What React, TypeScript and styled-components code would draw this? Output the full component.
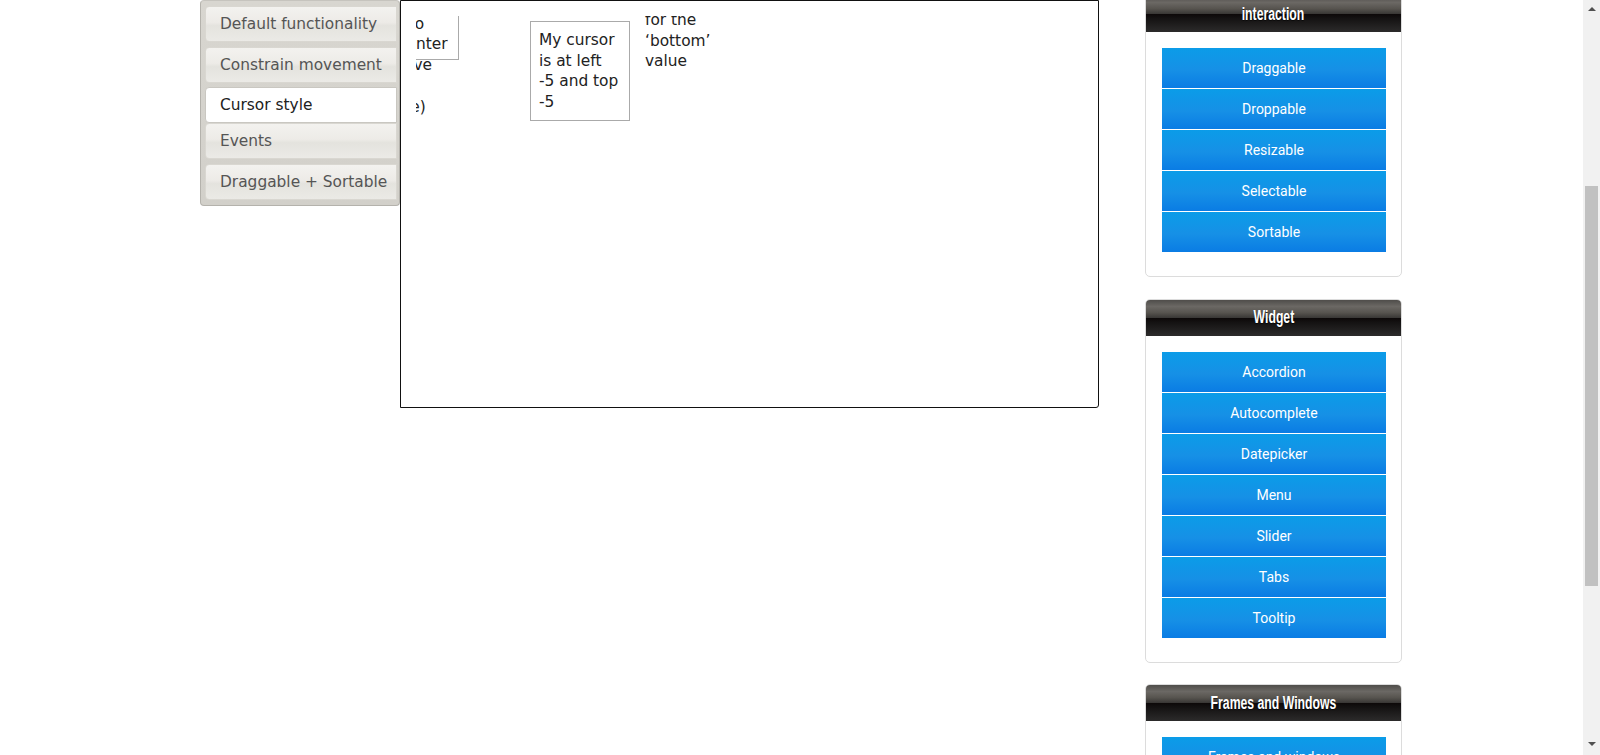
import React from "react";
import styled, { createGlobalStyle } from "styled-components";

const Global = createGlobalStyle`
  html, body { margin: 0; padding: 0; background: #fff; overflow: hidden; }
  #root { height: 755px; }
`;

const Screen = styled.div`
  display: flex;
  width: 1600px;
  height: 755px;
  overflow: hidden;
`;

const Main = styled.div`
  flex: 1;
  overflow: hidden;
`;

const Page = styled.div`
  display: flex;
  align-items: flex-start;
  padding-left: 200px;
`;

const TabsPanel = styled.ul`
  box-sizing: border-box;
  width: 200px;
  margin: 0;
  padding: 5px 0 5px 4px;
  list-style: none;
  display: flex;
  flex-direction: column;
  background: linear-gradient(to bottom, #d8d6d0, #d2d0ca);
  border: 1px solid #b4b2ac;
  border-top-color: #c6c4be;
  border-radius: 4px;
`;

const Tab = styled.li<{ $active?: boolean; $gap: number }>`
  box-sizing: border-box;
  height: 36px;
  margin: 0 2px ${(p) => p.$gap}px 0;
  padding-left: 14px;
  display: flex;
  align-items: center;
  font-family: "DejaVu Sans", Verdana, sans-serif;
  font-size: 15.4px;
  color: ${(p) => (p.$active ? "#212121" : "#555")};
  background: ${(p) =>
    p.$active
      ? "#fff"
      : "linear-gradient(to bottom, #f3f2ef 0%, #edebe7 45%, #e4e3de 55%, #ebeae6 100%)"};
  border: 1px solid ${(p) => (p.$active ? "#c9c7c1" : "#d9d7d1")};
  border-radius: 4px 0 0 4px;
`;

const ContentBox = styled.div`
  box-sizing: border-box;
  width: 699px;
  height: 408px;
  padding: 15px;
  border: 1px solid #111;
  border-radius: 0 0 3px 0;
  background: #fff;
`;

const Viewport = styled.div`
  width: 100%;
  height: 100%;
  overflow: hidden;
`;

const Doc = styled.div`
  display: flex;
  align-items: flex-start;
  margin: -32px 0 0 -57px;
  font-family: "DejaVu Sans", Verdana, sans-serif;
  font-size: 15.4px;
  line-height: 20.7px;
  color: #222;
`;

const DragBox = styled.div<{ $top: number; $left: number; $height: number; $bordered?: boolean }>`
  box-sizing: border-box;
  flex: none;
  width: 100px;
  height: ${(p) => p.$height}px;
  margin-top: ${(p) => p.$top}px;
  margin-left: ${(p) => p.$left}px;
  padding: 8px;
  border: 1px solid ${(p) => (p.$bordered ? "#aaa" : "transparent")};
  white-space: nowrap;
`;

const Line = styled.div``;

const Sidebar = styled.aside`
  width: 257px;
  margin-left: 46px;
  margin-top: -5px;
  display: flex;
  flex-direction: column;
  gap: 21.5px;
`;

const Card = styled.section`
  box-sizing: border-box;
  border: 1px solid #dcdcdc;
  border-radius: 5px;
  background: #fff;
  overflow: hidden;
`;

const CardHeader = styled.h3`
  margin: 0;
  height: 36px;
  display: flex;
  align-items: center;
  justify-content: center;
  overflow: hidden;
  background: linear-gradient(
    to bottom,
    #4f4d4a 0%,
    #6b6864 18%,
    #57544f 35%,
    #3a3836 49%,
    #0c0808 50%,
    #141212 62%,
    #2c2b2b 100%
  );
`;

const HeaderText = styled.span`
  display: inline-block;
  font-family: "Liberation Sans", Arial, sans-serif;
  font-weight: bold;
  font-size: 18px;
  color: #fff;
  white-space: nowrap;
  transform: scaleX(0.68);
  text-shadow: 0 1px 1px rgba(0, 0, 0, 0.6);
`;

const ButtonList = styled.div`
  display: flex;
  flex-direction: column;
  gap: 1px;
  padding: 16px 15px 24px 16px;
`;

const NavButton = styled.a`
  height: 40px;
  display: flex;
  align-items: center;
  justify-content: center;
  font-family: Roboto, "Liberation Sans", sans-serif;
  font-size: 14px;
  color: #fff;
  text-decoration: none;
  background: linear-gradient(to bottom, #0b9ce8 0%, #1690e6 55%, #0a7ce4 100%);
`;

const Scrollbar = styled.div`
  width: 17px;
  height: 755px;
  background: #f1f1f1;
  display: flex;
  flex-direction: column;
  align-items: center;
`;

const Arrow = styled.div<{ $down?: boolean }>`
  width: 0;
  height: 0;
  margin-top: ${(p) => (p.$down ? "auto" : "7px")};
  margin-bottom: ${(p) => (p.$down ? "9px" : "0")};
  border-left: 4px solid transparent;
  border-right: 4px solid transparent;
  ${(p) => (p.$down ? "border-top: 4px solid #505050;" : "border-bottom: 4px solid #505050;")}
`;

const Thumb = styled.div`
  width: 13px;
  height: 400px;
  margin-top: 175px;
  background: #c1c1c1;
`;

const tabs = [
  { label: "Default functionality", gap: 5 },
  { label: "Constrain movement", gap: 4 },
  { label: "Cursor style", gap: 0, active: true },
  { label: "Events", gap: 5 },
  { label: "Draggable + Sortable", gap: 0 },
];

const sections = [
  { title: "interaction", items: ["Draggable", "Droppable", "Resizable", "Selectable", "Sortable"] },
  {
    title: "Widget",
    items: ["Accordion", "Autocomplete", "Datepicker", "Menu", "Slider", "Tabs", "Tooltip"],
  },
  { title: "Frames and Windows", items: ["Frames and windows"] },
];

export default function App() {
  return (
    <>
      <Global />
      <Screen>
        <Main>
          <Page>
            <TabsPanel>
              {tabs.map((t) => (
                <Tab key={t.label} $active={t.active} $gap={t.gap}>
                  {t.label}
                </Tab>
              ))}
            </TabsPanel>
            <ContentBox>
              <Viewport>
                <Doc>
                  <DragBox $top={0} $left={0} $height={76} $bordered>
                    <Line>I will always</Line>
                    <Line>stick to</Line>
                    <Line>the center</Line>
                    <Line>(relative</Line>
                    <Line>to the</Line>
                    <Line>mouse)</Line>
                  </DragBox>
                  <DragBox $top={37} $left={71} $height={100} $bordered>
                    <Line>My cursor</Line>
                    <Line>is at left</Line>
                    <Line>-5 and top</Line>
                    <Line>-5</Line>
                  </DragBox>
                  <DragBox $top={-66} $left={6} $height={160}>
                    <Line>My cursor</Line>
                    <Line>position is</Line>
                    <Line>only</Line>
                    <Line>controlled</Line>
                    <Line>for the</Line>
                    <Line>‘bottom’</Line>
                    <Line>value</Line>
                  </DragBox>
                </Doc>
              </Viewport>
            </ContentBox>
            <Sidebar>
              {sections.map((s) => (
                <Card key={s.title}>
                  <CardHeader>
                    <HeaderText>{s.title}</HeaderText>
                  </CardHeader>
                  <ButtonList>
                    {s.items.map((it) => (
                      <NavButton key={it}>{it}</NavButton>
                    ))}
                  </ButtonList>
                </Card>
              ))}
            </Sidebar>
          </Page>
        </Main>
        <Scrollbar>
          <Arrow />
          <Thumb />
          <Arrow $down />
        </Scrollbar>
      </Screen>
    </>
  );
}
